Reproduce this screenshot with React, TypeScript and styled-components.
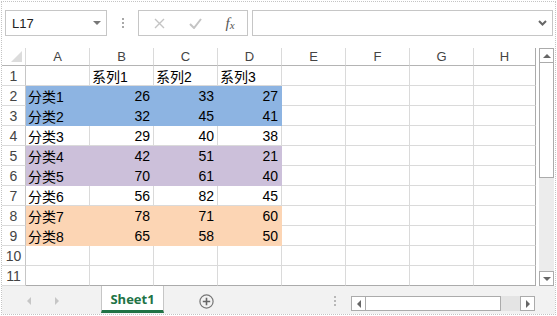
import { Fragment } from 'react';
import styled, { createGlobalStyle } from 'styled-components';

const GlobalStyle = createGlobalStyle`
  body {
    margin: 0;
    background: #fff;
    font-family: "Liberation Sans", "Noto Sans CJK SC", sans-serif;
  }
`;

const BLUE = '#8db4e2';
const PURPLE = '#ccc0da';
const PEACH = '#fcd5b4';
const GRID = '#dadada';

type Row = { label: string; values: (number | string)[]; fill?: string };

const rows: Row[] = [
  { label: '', values: ['系列1', '系列2', '系列3'] },
  { label: '分类1', values: [26, 33, 27], fill: BLUE },
  { label: '分类2', values: [32, 45, 41], fill: BLUE },
  { label: '分类3', values: [29, 40, 38] },
  { label: '分类4', values: [42, 51, 21], fill: PURPLE },
  { label: '分类5', values: [70, 61, 40], fill: PURPLE },
  { label: '分类6', values: [56, 82, 45] },
  { label: '分类7', values: [78, 71, 60], fill: PEACH },
  { label: '分类8', values: [65, 58, 50], fill: PEACH },
  { label: '', values: [] },
  { label: '', values: [] },
];

const columns = ['A', 'B', 'C', 'D', 'E', 'F', 'G', 'H'];

const Frame = styled.div`
  box-sizing: border-box;
  width: 555px;
  height: 314px;
  margin: 1px;
  border: 1px dotted #c4c4c4;
  display: flex;
  flex-direction: column;
  overflow: hidden;
`;

const FormulaBar = styled.div`
  display: flex;
  align-items: center;
  padding: 8px 0 0 3px;
  height: 26px;
`;

const NameBox = styled.div`
  box-sizing: border-box;
  width: 102px;
  height: 26px;
  border: 1px solid #c6c6c6;
  display: flex;
  align-items: center;
  justify-content: space-between;
  padding: 0 5px 0 6px;
  font-size: 13px;
  color: #222;
`;

const Caret = styled.span`
  width: 0;
  height: 0;
  border-left: 4px solid transparent;
  border-right: 4px solid transparent;
  border-top: 4px solid #777;
`;

const VDots = styled.div`
  width: 31px;
  display: flex;
  flex-direction: column;
  align-items: center;
  gap: 2px;
  span {
    width: 2px;
    height: 2px;
    background: #a8a8a8;
  }
`;

const FxBox = styled.div`
  box-sizing: border-box;
  width: 110px;
  height: 26px;
  border: 1px solid #c6c6c6;
  display: grid;
  grid-template-columns: 38px 34px 36px;
  align-items: center;
  justify-items: center;
  padding-left: 1px;
`;

const Fx = styled.span`
  font-family: "Liberation Serif", serif;
  font-style: italic;
  font-size: 15px;
  color: #555;
  sub {
    font-size: 11px;
    vertical-align: -1px;
  }
`;

const FormulaInput = styled.div`
  box-sizing: border-box;
  flex: 1;
  height: 26px;
  margin: 0 2px 0 4px;
  border: 1px solid #c6c6c6;
  display: flex;
  align-items: center;
  justify-content: flex-end;
  padding-right: 5px;
`;

const Main = styled.div`
  display: flex;
  margin-top: 12px;
  height: 238px;
`;

const Sheet = styled.div`
  display: grid;
  grid-template-columns: 24px repeat(7, 64px) 62px;
  grid-template-rows: 18px repeat(11, 20px);
  font-size: 14px;
  color: #000;
`;

const Corner = styled.div`
  box-sizing: border-box;
  border-right: 1px solid ${GRID};
  border-bottom: 1px solid #b4b4b4;
  display: flex;
  align-items: flex-end;
  justify-content: flex-end;
  padding: 0 3px 3px 0;
`;

const ColHead = styled.div<{ $last?: boolean }>`
  box-sizing: border-box;
  border-right: 1px solid ${(p) => (p.$last ? '#ababab' : GRID)};
  border-bottom: 1px solid #b4b4b4;
  display: flex;
  align-items: center;
  justify-content: center;
  font-size: 13px;
  color: #444;
`;

const RowHead = styled.div`
  box-sizing: border-box;
  border-right: 1px solid #c6c6c6;
  border-bottom: 1px solid ${GRID};
  display: flex;
  align-items: center;
  justify-content: center;
  font-size: 14px;
  color: #444;
`;

const Cell = styled.div<{ $fill?: string; $right?: boolean; $last?: boolean; $bottom?: boolean }>`
  box-sizing: border-box;
  background: ${(p) => p.$fill || '#fff'};
  border-right: 1px solid ${(p) => (p.$last ? '#ababab' : p.$fill || GRID)};
  border-bottom: 1px solid ${(p) => (p.$bottom ? '#ababab' : p.$fill || GRID)};
  display: flex;
  align-items: center;
  justify-content: ${(p) => (p.$right ? 'flex-end' : 'flex-start')};
  padding: 0 3px 0 2px;
  white-space: nowrap;
  overflow: hidden;
`;

const VScroll = styled.div`
  box-sizing: border-box;
  width: 15px;
  margin-left: 3px;
  display: flex;
  flex-direction: column;
  background: #ececec;
`;

const ScrollBtn = styled.div`
  box-sizing: border-box;
  width: 15px;
  height: 15px;
  border: 1px solid #ababab;
  background: #fff;
  display: flex;
  align-items: center;
  justify-content: center;
  flex-shrink: 0;
`;

const VThumb = styled.div`
  box-sizing: border-box;
  height: 116px;
  margin-top: -1px;
  border: 1px solid #ababab;
  background: #fff;
`;

const Track = styled.div`
  flex: 1;
`;

const Arrow = styled.span<{ $dir: 'up' | 'down' | 'left' | 'right'; $color?: string }>`
  width: 0;
  height: 0;
  ${(p) => {
    const c = p.$color || '#666';
    if (p.$dir === 'up') return `border-left:4px solid transparent;border-right:4px solid transparent;border-bottom:4px solid ${c};`;
    if (p.$dir === 'down') return `border-left:4px solid transparent;border-right:4px solid transparent;border-top:4px solid ${c};`;
    if (p.$dir === 'left') return `border-top:4px solid transparent;border-bottom:4px solid transparent;border-right:4px solid ${c};`;
    return `border-top:4px solid transparent;border-bottom:4px solid transparent;border-left:4px solid ${c};`;
  }}
`;

const BottomBar = styled.div`
  flex: 1;
  display: flex;
  background: #f2f2f2;
`;

const TabNav = styled.div`
  width: 99px;
  display: flex;
  align-items: center;
  gap: 24px;
  padding: 2px 0 0 25px;
  box-sizing: border-box;
`;

const Tab = styled.div`
  box-sizing: border-box;
  width: 63px;
  margin-bottom: 1px;
  background: #fff;
  border-left: 1px solid #c6c6c6;
  border-right: 1px solid #c6c6c6;
  border-bottom: 3px solid #217346;
  display: flex;
  align-items: center;
  justify-content: center;
  padding-top: 2px;
  font-family: "Open Sans", "Liberation Sans", sans-serif;
  font-weight: bold;
  font-size: 13px;
  color: #217346;
`;

const AddSheet = styled.div`
  margin-left: 35px;
  display: flex;
  align-items: center;
  padding-top: 2px;
`;

const BarDots = styled(VDots)`
  width: 3px;
  margin-left: 119px;
  justify-content: center;
  padding-top: 2px;
  span {
    background: #b8b8b8;
  }
`;

const HScroll = styled.div`
  box-sizing: border-box;
  width: 184px;
  height: 15px;
  margin: 10px 0 0 15px;
  display: flex;
  background: #e4e4e4;
`;

const HThumb = styled.div`
  box-sizing: border-box;
  width: 136px;
  margin-left: -1px;
  border: 1px solid #ababab;
  background: #fff;
`;

export default function App() {
  return (
    <>
      <GlobalStyle />
      <Frame>
        <FormulaBar>
          <NameBox>
            <span>L17</span>
            <Caret />
          </NameBox>
          <VDots>
            <span />
            <span />
            <span />
          </VDots>
          <FxBox>
            <svg width="11" height="11" viewBox="0 0 11 11">
              <path d="M1 1 L10 10 M10 1 L1 10" stroke="#c4c4c4" strokeWidth="1.4" />
            </svg>
            <svg width="13" height="11" viewBox="0 0 13 11">
              <path d="M1 6 L5 10 L12 1" stroke="#c4c4c4" strokeWidth="2" fill="none" />
            </svg>
            <Fx>
              f<sub>x</sub>
            </Fx>
          </FxBox>
          <FormulaInput>
            <svg width="9" height="6" viewBox="0 0 9 6">
              <path d="M1 1 L4.5 4.5 L8 1" stroke="#666" strokeWidth="2" fill="none" />
            </svg>
          </FormulaInput>
        </FormulaBar>

        <Main>
          <Sheet>
            <Corner>
              <svg width="11" height="11" viewBox="0 0 11 11">
                <path d="M11 0 L11 11 L0 11 Z" fill="#dcdcdc" />
              </svg>
            </Corner>
            {columns.map((c, i) => (
              <ColHead key={c} $last={i === columns.length - 1}>
                {c}
              </ColHead>
            ))}
            {rows.map((r, ri) => (
              <Fragment key={ri}>
                <RowHead>{ri + 1}</RowHead>
                {columns.map((c, ci) => {
                  const inData = ci < 4;
                  const text = ci === 0 ? r.label : ci < 4 ? r.values[ci - 1] ?? '' : '';
                  return (
                    <Cell
                      key={c}
                      $fill={inData ? r.fill : undefined}
                      $right={typeof text === 'number'}
                      $last={ci === columns.length - 1}
                      $bottom={ri === rows.length - 1}
                    >
                      {text}
                    </Cell>
                  );
                })}
              </Fragment>
            ))}
          </Sheet>
          <VScroll>
            <ScrollBtn>
              <Arrow $dir="up" />
            </ScrollBtn>
            <VThumb />
            <Track />
            <ScrollBtn>
              <Arrow $dir="down" />
            </ScrollBtn>
          </VScroll>
        </Main>

        <BottomBar>
          <TabNav>
            <Arrow $dir="left" $color="#c6c6c6" />
            <Arrow $dir="right" $color="#c6c6c6" />
          </TabNav>
          <Tab>Sheet1</Tab>
          <AddSheet>
            <svg width="15" height="15" viewBox="0 0 15 15">
              <circle cx="7.5" cy="7.5" r="6.6" stroke="#777" strokeWidth="1.2" fill="none" />
              <path d="M7.5 3.8 V11.2 M3.8 7.5 H11.2" stroke="#666" strokeWidth="1.6" />
            </svg>
          </AddSheet>
          <BarDots>
            <span />
            <span />
            <span />
          </BarDots>
          <HScroll>
            <ScrollBtn>
              <Arrow $dir="left" />
            </ScrollBtn>
            <HThumb />
            <Track />
            <ScrollBtn>
              <Arrow $dir="right" />
            </ScrollBtn>
          </HScroll>
        </BottomBar>
      </Frame>
    </>
  );
}
